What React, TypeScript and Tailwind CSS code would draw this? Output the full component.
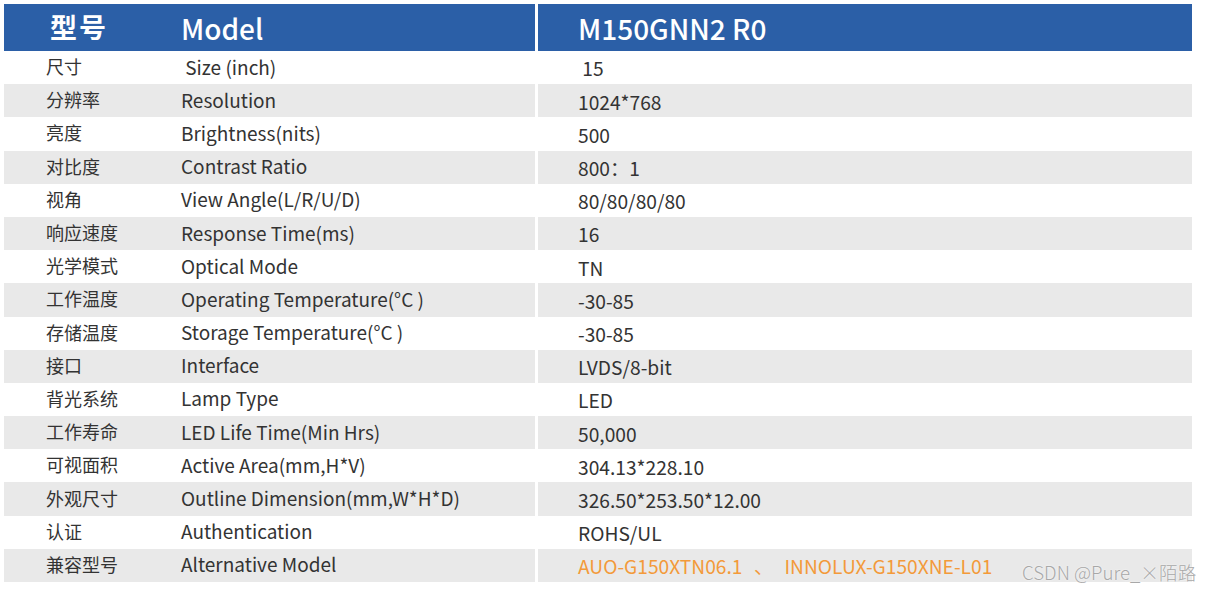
import React from 'react';

type Row = { cn: string; en: string; value: string; accent?: boolean };

const rows: Row[] = [
  { cn: '尺寸', en: ' Size (inch)', value: ' 15' },
  { cn: '分辨率', en: 'Resolution', value: '1024*768' },
  { cn: '亮度', en: 'Brightness(nits)', value: '500' },
  { cn: '对比度', en: 'Contrast Ratio', value: '800：1' },
  { cn: '视角', en: 'View Angle(L/R/U/D)', value: '80/80/80/80' },
  { cn: '响应速度', en: 'Response Time(ms)', value: '16' },
  { cn: '光学模式', en: 'Optical Mode', value: 'TN' },
  { cn: '工作温度', en: 'Operating Temperature(°C )', value: '-30-85' },
  { cn: '存储温度', en: 'Storage Temperature(°C )', value: '-30-85' },
  { cn: '接口', en: 'Interface', value: 'LVDS/8-bit' },
  { cn: '背光系统', en: 'Lamp Type', value: 'LED' },
  { cn: '工作寿命', en: 'LED Life Time(Min Hrs)', value: '50,000' },
  { cn: '可视面积', en: 'Active Area(mm,H*V)', value: '304.13*228.10' },
  { cn: '外观尺寸', en: 'Outline Dimension(mm,W*H*D)', value: '326.50*253.50*12.00' },
  { cn: '认证', en: 'Authentication', value: 'ROHS/UL' },
  { cn: '兼容型号', en: 'Alternative Model', value: 'AUO-G150XTN06.1', accent: true },
];

const font = { fontFamily: '"Noto Sans CJK SC", "Noto Sans", sans-serif' };

export default function App() {
  return (
    <div className="relative w-[1212px] h-[593px] bg-white pt-[4px] pl-[4px] text-[#333333]" style={font}>
      <div className="w-[1188px] flex flex-col">
        {/* Header */}
        <div className="flex h-[47px] gap-[3px] text-white">
          <div className="w-[531px] flex items-center bg-[#2b5fa7]">
            <span className="w-[177px] pl-[46px] text-[27px] font-bold tracking-[2px]">型号</span>
            <span className="text-[28px] font-medium">Model</span>
          </div>
          <div className="flex-1 flex items-center bg-[#2b5fa7] pl-[40px]">
            <span className="text-[28px] font-medium">M150GNN2 R0</span>
          </div>
        </div>

        {/* Rows */}
        {rows.map((r, i) => {
          const gray = i % 2 === 1;
          return (
            <div key={r.cn} className="flex h-[33.2px] gap-[3px] leading-none">
              <div className={`w-[531px] flex items-center pb-[3px] ${gray ? 'bg-[#e9e9e9]' : ''}`}>
                <span className="w-[177px] pl-[42px] text-[18px]">{r.cn}</span>
                <span className="whitespace-pre text-[19px]">{r.en}</span>
              </div>
              <div className={`flex-1 flex items-center pl-[40px] pt-[3px] text-[19.2px] ${gray ? 'bg-[#e9e9e9]' : ''}`}>
                {r.accent ? (
                  <span className="flex items-center text-[#f39a3a]">
                    <span>{r.value}</span>
                    <span className="w-[42px] text-center">、</span>
                    <span>INNOLUX-G150XNE-L01</span>
                  </span>
                ) : (
                  <span className="whitespace-pre">{r.value}</span>
                )}
              </div>
            </div>
          );
        })}
      </div>

      {/* Watermark */}
      <div className="absolute left-[1022px] top-[558px] text-[18.7px] font-light text-[#a8a8a8] whitespace-nowrap [text-shadow:0_0_2px_#ffffff]">
        CSDN @Pure_×陌路
      </div>
    </div>
  );
}
